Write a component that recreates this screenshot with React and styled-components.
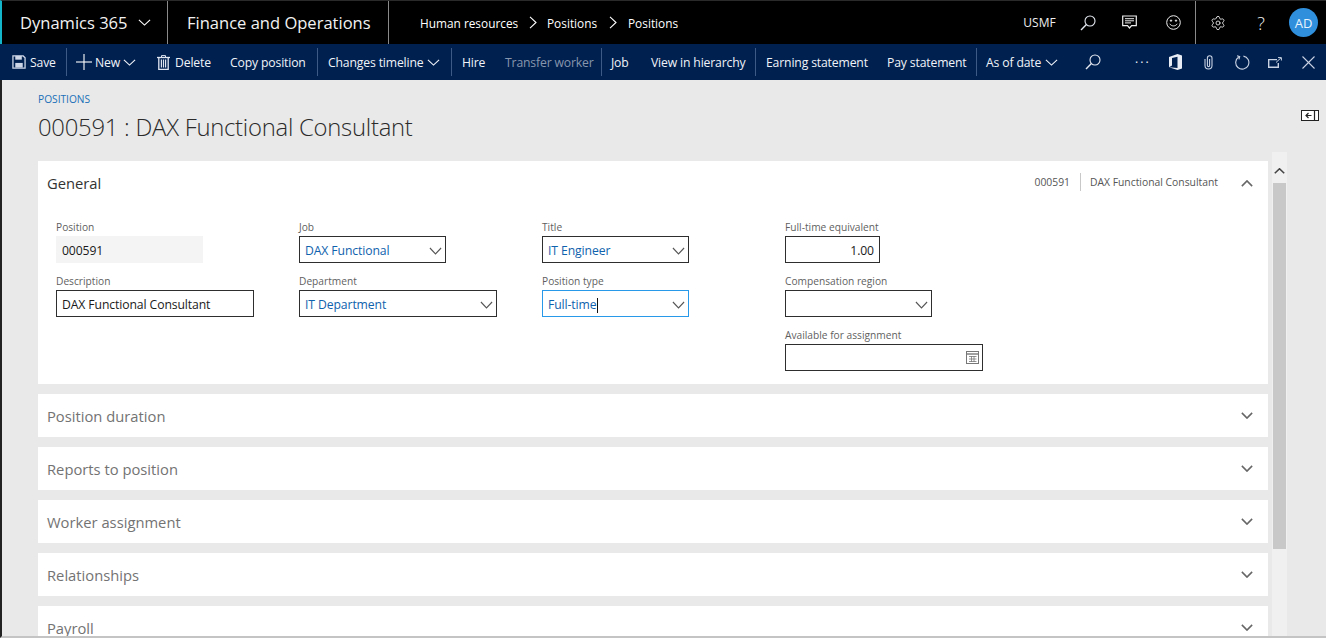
import React from "react";
import styled, { createGlobalStyle } from "styled-components";
import { Settings } from "lucide-react";

const GlobalStyle = createGlobalStyle`
  html, body {
    margin: 0;
    padding: 0;
    height: 100%;
    overflow: hidden;
    background: #e9e9e9;
    font-family: "Open Sans", "Liberation Sans", sans-serif;
  }
  * { box-sizing: border-box; }
`;

const Chevron = ({ size = 14, up, color = "currentColor", weight = 1.2, height }) => (
  <svg width={size} height={height || size * 0.6} viewBox="0 0 14 8" preserveAspectRatio="none" fill="none">
    <polyline
      points={up ? "1,7 7,1 13,7" : "1,1 7,7 13,1"}
      stroke={color}
      strokeWidth={weight}
    />
  </svg>
);

const Caret = () => (
  <svg width="8" height="13" viewBox="0 0 8 13" fill="none">
    <polyline points="1,0.8 7,6.5 1,12.2" stroke="#fff" strokeWidth="1.1" />
  </svg>
);

const SearchIcon = () => (
  <svg width="16" height="16" viewBox="0 0 16 16" fill="none" stroke="#e4e8f0" strokeWidth="1.1">
    <circle cx="10" cy="6" r="5" />
    <line x1="6.4" y1="9.6" x2="1" y2="15" strokeWidth="1.4" />
  </svg>
);

const SaveIcon = () => (
  <svg width="14" height="14" viewBox="0 0 15 15" fill="none" stroke="#cdd6e6" strokeWidth="1.4">
    <path d="M1 1h11l2 2v11H1z" />
    <rect x="3.5" y="1" width="7" height="4" fill="#cdd6e6" stroke="none" />
    <rect x="3.5" y="8.5" width="8" height="5" fill="#cdd6e6" stroke="none" />
  </svg>
);

const PlusIcon = () => (
  <svg width="16" height="16" viewBox="0 0 16 16" stroke="#fff" strokeWidth="1.1">
    <line x1="0" y1="8" x2="16" y2="8" />
    <line x1="8" y1="0" x2="8" y2="16" />
  </svg>
);

const TrashIcon = () => (
  <svg width="13" height="15" viewBox="0 0 13 15" fill="none" stroke="#dfe6f2" strokeWidth="1">
    <line x1="0" y1="2.5" x2="13" y2="2.5" strokeWidth="1.3" />
    <path d="M4.5 2V.6h4V2" />
    <path d="M1.8 3v11.4h9.4V3" strokeWidth="1.3" />
    <path d="M4.4 4.5v8M6.5 4.5v8M8.6 4.5v8" strokeWidth="1.2" />
  </svg>
);

const OfficeIcon = () => (
  <svg width="13" height="16" viewBox="0 0 13 16">
    <path d="M0 3 8.5 0 13 1.5v13L8.5 16 0 13.2 8.5 14V2.8L3 4v7.6L0 13.2z" fill="#e8edf5" />
  </svg>
);

const ClipIcon = () => (
  <svg width="9" height="15" viewBox="0 0 9 15" fill="none" stroke="#c8d2e2" strokeWidth="1.1">
    <path d="M1 4v6.5a3.5 3.5 0 0 0 7 0V3a2.3 2.3 0 0 0-4.6 0v7.5a1.1 1.1 0 0 0 2.2 0V4" />
  </svg>
);

const RefreshIcon = () => (
  <svg width="15" height="15" viewBox="0 0 16 16" fill="none" stroke="#c8d2e2" strokeWidth="1.2">
    <path d="M4 2.2A7 7 0 1 0 9 1.2" />
    <polyline points="2.2,.8 5,1.8 4.2,4.6" />
  </svg>
);

const PopoutIcon = () => (
  <svg width="14" height="11" viewBox="0 0 14 11" fill="none" stroke="#c8d2e2">
    <path d="M9 2.6H.7v7.7h9.6V6" strokeWidth="1.4" />
    <path d="M8 5.5 13 .8M10 .6h3.4V3.5" strokeWidth="1" />
  </svg>
);

const CloseIcon = () => (
  <svg width="13" height="13" viewBox="0 0 13 13" stroke="#c8d2e2" strokeWidth="1.1">
    <line x1="0.5" y1="0.5" x2="12.5" y2="12.5" />
    <line x1="12.5" y1="0.5" x2="0.5" y2="12.5" />
  </svg>
);

const ChatIcon = () => (
  <svg width="15" height="15" viewBox="0 0 15 15" fill="none" stroke="#eee" strokeWidth="1.2">
    <path d="M.7 1h13.6v9.6H9.6L7.5 13l-2-2.4H.7z" />
    <path d="M3 3.7h9M3 5.8h9M3 7.9h6" strokeWidth="1" />
  </svg>
);

const SmileIcon = () => (
  <svg width="15" height="15" viewBox="0 0 15 15" fill="none" stroke="#eee" strokeWidth="1">
    <circle cx="7.5" cy="7.5" r="6.8" />
    <circle cx="5" cy="5.6" r=".7" fill="#eee" />
    <circle cx="10" cy="5.6" r=".7" fill="#eee" />
    <path d="M3.8 8.8c1.6 2.8 5.8 2.8 7.4 0" />
  </svg>
);

const CalendarIcon = () => (
  <svg width="13" height="13" viewBox="0 0 13 13" fill="none" stroke="#777" strokeWidth="1">
    <rect x=".5" y=".5" width="12" height="12" />
    <path d="M.5 3h12" strokeWidth="1.4" />
    <path d="M3 5.5h7.5M3 8h7.5M3 10.5h7.5M5.5 5v6M8 5v6" strokeWidth=".8" />
  </svg>
);

const PaneIcon = () => (
  <svg width="18" height="11" viewBox="0 0 18 11" fill="none" stroke="#222">
    <rect x=".5" y=".5" width="17" height="10" strokeWidth="1" fill="#fff" />
    <path d="M13.5.5v10" strokeWidth="1.2" />
    <path d="M10.5 5.5H5M7.5 3 5 5.5 7.5 8" strokeWidth="1.2" />
  </svg>
);

const Page = styled.div`
  width: 1326px;
  height: 638px;
  display: flex;
  flex-direction: column;
  overflow: hidden;
  background: #e9e9e9;
`;

const TopBar = styled.header`
  height: 44px;
  flex: none;
  background: #000;
  border-left: 2px solid #12b5c9;
  border-top: 1px solid #2a2a2a;
  display: flex;
  align-items: stretch;
  color: #fff;
`;

const TopSection = styled.div`
  width: ${(p) => p.$w}px;
  flex: none;
  display: flex;
  align-items: center;
  padding-left: ${(p) => p.$pad || 0}px;
  gap: ${(p) => p.$gap || 0}px;
  border-right: ${(p) => (p.$line ? "1px solid #8a8a8a" : "none")};
`;

const AppName = styled.span`
  font-size: 16.55px;
  white-space: nowrap;
  color: #f2f2f2;
`;

const Crumb = styled.span`
  font-size: 11.85px;
  white-space: nowrap;
  width: ${(p) => p.$w}px;
  margin-top: 1px;
  margin-left: ${(p) => p.$ml || 0}px;
`;

const TopIconSlot = styled.div`
  width: ${(p) => p.$w}px;
  margin-left: ${(p) => p.$ml || 0}px;
  flex: none;
  display: flex;
  justify-content: center;
  align-items: center;
  font-size: ${(p) => p.$size || 12}px;
  font-weight: ${(p) => p.$weight || 400};
  color: #eee;
`;

const Avatar = styled.div`
  width: 29px;
  height: 29px;
  flex: none;
  border-radius: 50%;
  background: #2f8fdc;
  color: #eaf4fc;
  font-size: 13px;
  display: flex;
  align-items: center;
  justify-content: center;
`;

const Ribbon = styled.nav`
  height: 36px;
  flex: none;
  background: #002050;
  display: flex;
  align-items: center;
  color: #f0f3f8;
  font-size: 12.2px;
  padding-left: 12px;
`;

const RibbonItem = styled.div`
  width: ${(p) => p.$w}px;
  flex: none;
  display: flex;
  align-items: center;
  gap: ${(p) => p.$gap ?? 4}px;
  white-space: nowrap;
  color: ${(p) => (p.$off ? "#8796ad" : "#f0f3f8")};
  letter-spacing: -0.15px;
`;

const Dots = styled(RibbonItem)`
  letter-spacing: 2px;
`;

const RibbonLine = styled.span`
  width: 1px;
  height: 28px;
  flex: none;
  background: #3c5a85;
  margin-right: ${(p) => p.$after || 10}px;
`;

const Body = styled.div`
  flex: 1;
  min-height: 0;
  display: flex;
  border-left: 2px solid #222;
  border-bottom: 2px solid #c4c4c4;
`;

const Main = styled.main`
  flex: none;
  width: 1270px;
  padding: 12px 0 0 36px;
  overflow: hidden;
`;

const Breadcrumb = styled.div`
  font-size: 10.2px;
  line-height: 14px;
  color: #2070b8;
`;

const PageTitle = styled.h1`
  margin: 4px 0 0;
  font-size: 23.85px;
  line-height: 34px;
  font-weight: 300;
  color: #2b2b2b;
  letter-spacing: -0.25px;
`;

const Sections = styled.div`
  margin-top: 17px;
  display: flex;
  flex-direction: column;
  gap: 10px;
`;

const Card = styled.section`
  background: #fff;
  width: 1230px;
  flex: none;
`;

const CardHead = styled.div`
  height: ${(p) => (p.$open ? 44 : 43)}px;
  padding: 0 15px 0 9px;
  display: flex;
  align-items: center;
  justify-content: space-between;
`;

const CardTitle = styled.h2`
  margin: 0;
  font-size: 14.75px;
  font-weight: 400;
  color: ${(p) => (p.$open ? "#333" : "#737373")};
`;

const Summary = styled.div`
  display: flex;
  align-items: center;
  font-size: 10.35px;
  color: #555;
  gap: 15px;
`;

const SummaryCell = styled.span`
  display: block;
  line-height: 18px;
  margin-bottom: 2px;
  & + & {
    border-left: 1px solid #c8c8c8;
    padding-left: 9px;
    margin-left: -5px;
  }
`;

const ToggleSlot = styled.span`
  display: flex;
  color: #666;
  margin-left: 8px;
`;

const FormGrid = styled.div`
  display: grid;
  grid-template-columns: repeat(4, 243px);
  padding: 13px 0 4px 18px;
`;

const FormColumn = styled.div`
  display: flex;
  flex-direction: column;
`;

const Field = styled.div`
  height: 54px;
  display: flex;
  flex-direction: column;
`;

const Label = styled.label`
  height: 18px;
  line-height: 18px;
  font-size: 10.2px;
  color: #5f5f5f;
`;

const Input = styled.div`
  width: ${(p) => p.$w}px;
  height: 27px;
  display: flex;
  align-items: center;
  justify-content: ${(p) => (p.$right ? "flex-end" : "space-between")};
  padding: 2px ${(p) => (p.$right ? 5 : 3)}px 0 5px;
  font-size: 12.2px;
  letter-spacing: -0.1px;
  color: ${(p) => (p.$link ? "#0f62ad" : "#1a1a1a")};
  background: ${(p) => (p.$readOnly ? "#f4f4f4" : "#fff")};
  border: 1px solid
    ${(p) => (p.$readOnly ? "#f4f4f4" : p.$focus ? "#2899e8" : "#2e2e2e")};
`;

const CalendarSlot = styled.span`
  display: flex;
  margin-top: -2px;
`;

const TextCursor = styled.span`
  display: inline-block;
  width: 1px;
  height: 15px;
  background: #111;
  vertical-align: middle;
`;

const ScrollTrack = styled.div`
  width: 15px;
  margin: 72px 0 0 0;
  flex: none;
  background: #f0f0f0;
  padding: 0 1px;
  display: flex;
  flex-direction: column;
`;

const ScrollUp = styled.div`
  height: 31px;
  display: flex;
  justify-content: center;
  padding-top: 16px;
`;

const ScrollThumb = styled.div`
  height: 366px;
  background: #c8c8c8;
`;

const PaneSlot = styled.div`
  flex: 1;
  display: flex;
  justify-content: flex-end;
  align-items: flex-start;
  padding: 30px 7px 0 0;
`;

const collapsed = ["Position duration", "Reports to position", "Worker assignment", "Relationships", "Payroll"];

const SelectChevron = () => <Chevron size={13} height={8} color="#555" />;

export default function App() {
  return (
    <Page>
      <GlobalStyle />
      <TopBar>
        <TopSection $w={166} $pad={18} $gap={10} $line>
          <AppName>Dynamics 365</AppName>
          <Chevron size={13} height={7} />
        </TopSection>
        <TopSection $w={221} $pad={19} $line>
          <AppName>Finance and Operations</AppName>
        </TopSection>
        <TopSection $w={633} $pad={31}>
          <Crumb $w={109}>Human resources</Crumb>
          <Caret />
          <Crumb $ml={10} $w={62}>Positions</Crumb>
          <Caret />
          <Crumb $ml={11} $w={60}>Positions</Crumb>
        </TopSection>
        <TopIconSlot $w={35}>USMF</TopIconSlot>
        <TopIconSlot $w={40} $ml={11}><SearchIcon /></TopIconSlot>
        <TopIconSlot $w={43}><ChatIcon /></TopIconSlot>
        <TopIconSlot $w={44}><SmileIcon /></TopIconSlot>
        <TopSection $w={1} $line />
        <TopIconSlot $w={43}><Settings size={16} strokeWidth={1.3} /></TopIconSlot>
        <TopIconSlot $w={44} $size={18} $weight={300}>?</TopIconSlot>
        <TopIconSlot $w={29} $ml={6}><Avatar>AD</Avatar></TopIconSlot>
      </TopBar>

      <Ribbon>
        <RibbonItem $w={54}><SaveIcon />Save</RibbonItem>
        <RibbonLine $after={9} />
        <RibbonItem $w={81} $gap={3}><PlusIcon />New<Chevron size={13} height={7} /></RibbonItem>
        <RibbonItem $w={73} $gap={5}><TrashIcon />Delete</RibbonItem>
        <RibbonItem $w={87}>Copy position</RibbonItem>
        <RibbonLine />
        <RibbonItem $w={123}>Changes timeline<Chevron size={13} height={7} /></RibbonItem>
        <RibbonLine />
        <RibbonItem $w={43}>Hire</RibbonItem>
        <RibbonItem $w={96} $off>Transfer worker</RibbonItem>
        <RibbonLine $after={9} />
        <RibbonItem $w={40}>Job</RibbonItem>
        <RibbonItem $w={104}>View in hierarchy</RibbonItem>
        <RibbonLine />
        <RibbonItem $w={121}>Earning statement</RibbonItem>
        <RibbonItem $w={89}>Pay statement</RibbonItem>
        <RibbonLine $after={9} />
        <RibbonItem $w={99}>As of date<Chevron size={13} height={7} /></RibbonItem>
        <RibbonItem $w={50}><SearchIcon /></RibbonItem>
        <Dots $w={34}>···</Dots>
        <RibbonItem $w={35}><OfficeIcon /></RibbonItem>
        <RibbonItem $w={31}><ClipIcon /></RibbonItem>
        <RibbonItem $w={33}><RefreshIcon /></RibbonItem>
        <RibbonItem $w={34}><PopoutIcon /></RibbonItem>
        <RibbonItem $w={13}><CloseIcon /></RibbonItem>
      </Ribbon>

      <Body>
        <Main>
          <Breadcrumb>POSITIONS</Breadcrumb>
          <PageTitle>000591 : DAX Functional Consultant</PageTitle>
          <Sections>
            <Card>
              <CardHead $open>
                <CardTitle $open>General</CardTitle>
                <Summary>
                  <SummaryCell>000591</SummaryCell>
                  <SummaryCell>DAX Functional Consultant</SummaryCell>
                  <ToggleSlot><Chevron size={12} height={7} up weight={1.8} /></ToggleSlot>
                </Summary>
              </CardHead>
              <FormGrid>
                <FormColumn>
                  <Field>
                    <Label>Position</Label>
                    <Input $w={147} $readOnly>000591</Input>
                  </Field>
                  <Field>
                    <Label>Description</Label>
                    <Input $w={198}>DAX Functional Consultant</Input>
                  </Field>
                </FormColumn>
                <FormColumn>
                  <Field>
                    <Label>Job</Label>
                    <Input $w={147} $link>DAX Functional<SelectChevron /></Input>
                  </Field>
                  <Field>
                    <Label>Department</Label>
                    <Input $w={198} $link>IT Department<SelectChevron /></Input>
                  </Field>
                </FormColumn>
                <FormColumn>
                  <Field>
                    <Label>Title</Label>
                    <Input $w={147} $link>IT Engineer<SelectChevron /></Input>
                  </Field>
                  <Field>
                    <Label>Position type</Label>
                    <Input $w={147} $link $focus>
                      <span>Full-time<TextCursor /></span>
                      <SelectChevron />
                    </Input>
                  </Field>
                </FormColumn>
                <FormColumn>
                  <Field>
                    <Label>Full-time equivalent</Label>
                    <Input $w={95} $right>1.00</Input>
                  </Field>
                  <Field>
                    <Label>Compensation region</Label>
                    <Input $w={147}><span /><SelectChevron /></Input>
                  </Field>
                  <Field>
                    <Label>Available for assignment</Label>
                    <Input $w={198}><span /><CalendarSlot><CalendarIcon /></CalendarSlot></Input>
                  </Field>
                </FormColumn>
              </FormGrid>
            </Card>
            {collapsed.map((name) => (
              <Card key={name}>
                <CardHead>
                  <CardTitle>{name}</CardTitle>
                  <ToggleSlot><Chevron size={12} height={7} color="#666" weight={1.8} /></ToggleSlot>
                </CardHead>
              </Card>
            ))}
          </Sections>
        </Main>
        <ScrollTrack>
          <ScrollUp><Chevron size={11} height={6} up color="#444" weight={2} /></ScrollUp>
          <ScrollThumb />
        </ScrollTrack>
        <PaneSlot>
          <PaneIcon />
        </PaneSlot>
      </Body>
    </Page>
  );
}
